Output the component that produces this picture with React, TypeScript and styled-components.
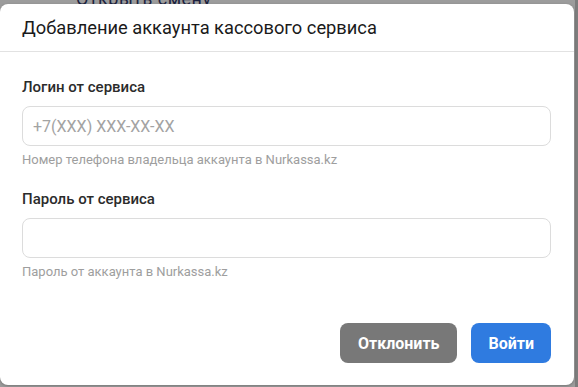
import React, { useState } from 'react';
import styled, { createGlobalStyle } from 'styled-components';

const GlobalStyle = createGlobalStyle`
  html, body {
    margin: 0;
    padding: 0;
    background: #9c9c9c;
  }
  * {
    box-sizing: border-box;
  }
`;

const Backdrop = styled.div`
  position: relative;
  width: 578px;
  height: 387px;
  overflow: hidden;
  background: #9c9c9c;
  padding: 4px 4px 2px 0;
  font-family: Roboto, 'Liberation Sans', sans-serif;
`;

const BehindText = styled.div`
  position: absolute;
  top: -12px;
  left: 76px;
  font-size: 18px;
  color: #1c2340;
  letter-spacing: 0.5px;
`;

const ScrollEdge = styled.div`
  position: absolute;
  top: 0;
  right: 0;
  width: 3px;
  height: 100%;
  background: #7d7d7d;
`;

const Modal = styled.div`
  position: relative;
  width: 574px;
  height: 381px;
  background: #ffffff;
  border-radius: 8px;
  display: flex;
  flex-direction: column;
  box-shadow: 0 1px 3px rgba(0, 0, 0, 0.25);
`;

const Header = styled.div`
  height: 48px;
  padding: 0 22px;
  display: flex;
  align-items: center;
  border-bottom: 1px solid #e2e2e2;
`;

const Title = styled.h2`
  margin: 0;
  font-size: 18.3px;
  font-weight: 400;
  color: #1a1a1a;
`;

const Body = styled.div`
  padding: 25px 23px 0 22px;
  display: flex;
  flex-direction: column;
`;

const Field = styled.div`
  display: flex;
  flex-direction: column;
  & + & {
    margin-top: 20px;
  }
`;

const Label = styled.label`
  font-size: 15px;
  line-height: 20px;
  font-weight: 500;
  color: #2b2b2b;
  margin-bottom: 9px;
`;

const Input = styled.input`
  height: 40px;
  width: 100%;
  padding: 0 10px;
  border: 1px solid #dcdcdc;
  border-radius: 8px;
  font-family: inherit;
  font-size: 16px;
  color: #333;
  outline: none;
  &::placeholder {
    color: #a3a3a3;
  }
`;

const Hint = styled.div`
  margin-top: 5px;
  font-size: 13px;
  line-height: 18px;
  color: #9e9e9e;
`;

const Footer = styled.div`
  margin-top: auto;
  padding: 0 23px 22px 22px;
  display: flex;
  justify-content: flex-end;
  gap: 14px;
`;

const Button = styled.button<{ primary?: boolean }>`
  height: 40px;
  padding: 0 ${props => (props.primary ? '17px' : '18px')};
  border: none;
  border-radius: 8px;
  font-family: inherit;
  font-size: 16px;
  font-weight: 700;
  color: #ffffff;
  background: ${props => (props.primary ? '#2f7be0' : '#787878')};
  cursor: pointer;
`;

export default function App() {
  const [login, setLogin] = useState('');
  const [password, setPassword] = useState('');

  return (
    <>
      <GlobalStyle />
      <Backdrop>
        <BehindText>Открыть смену</BehindText>
        <ScrollEdge />
        <Modal>
          <Header>
            <Title>Добавление аккаунта кассового сервиса</Title>
          </Header>
          <Body>
            <Field>
              <Label>Логин от сервиса</Label>
              <Input
                type="text"
                value={login}
                onChange={e => setLogin(e.target.value)}
                placeholder="+7(XXX) XXX-XX-XX"
              />
              <Hint>Номер телефона владельца аккаунта в Nurkassa.kz</Hint>
            </Field>
            <Field>
              <Label>Пароль от сервиса</Label>
              <Input
                type="password"
                value={password}
                onChange={e => setPassword(e.target.value)}
              />
              <Hint>Пароль от аккаунта в Nurkassa.kz</Hint>
            </Field>
          </Body>
          <Footer>
            <Button type="button">Отклонить</Button>
            <Button type="button" primary>Войти</Button>
          </Footer>
        </Modal>
      </Backdrop>
    </>
  );
}
